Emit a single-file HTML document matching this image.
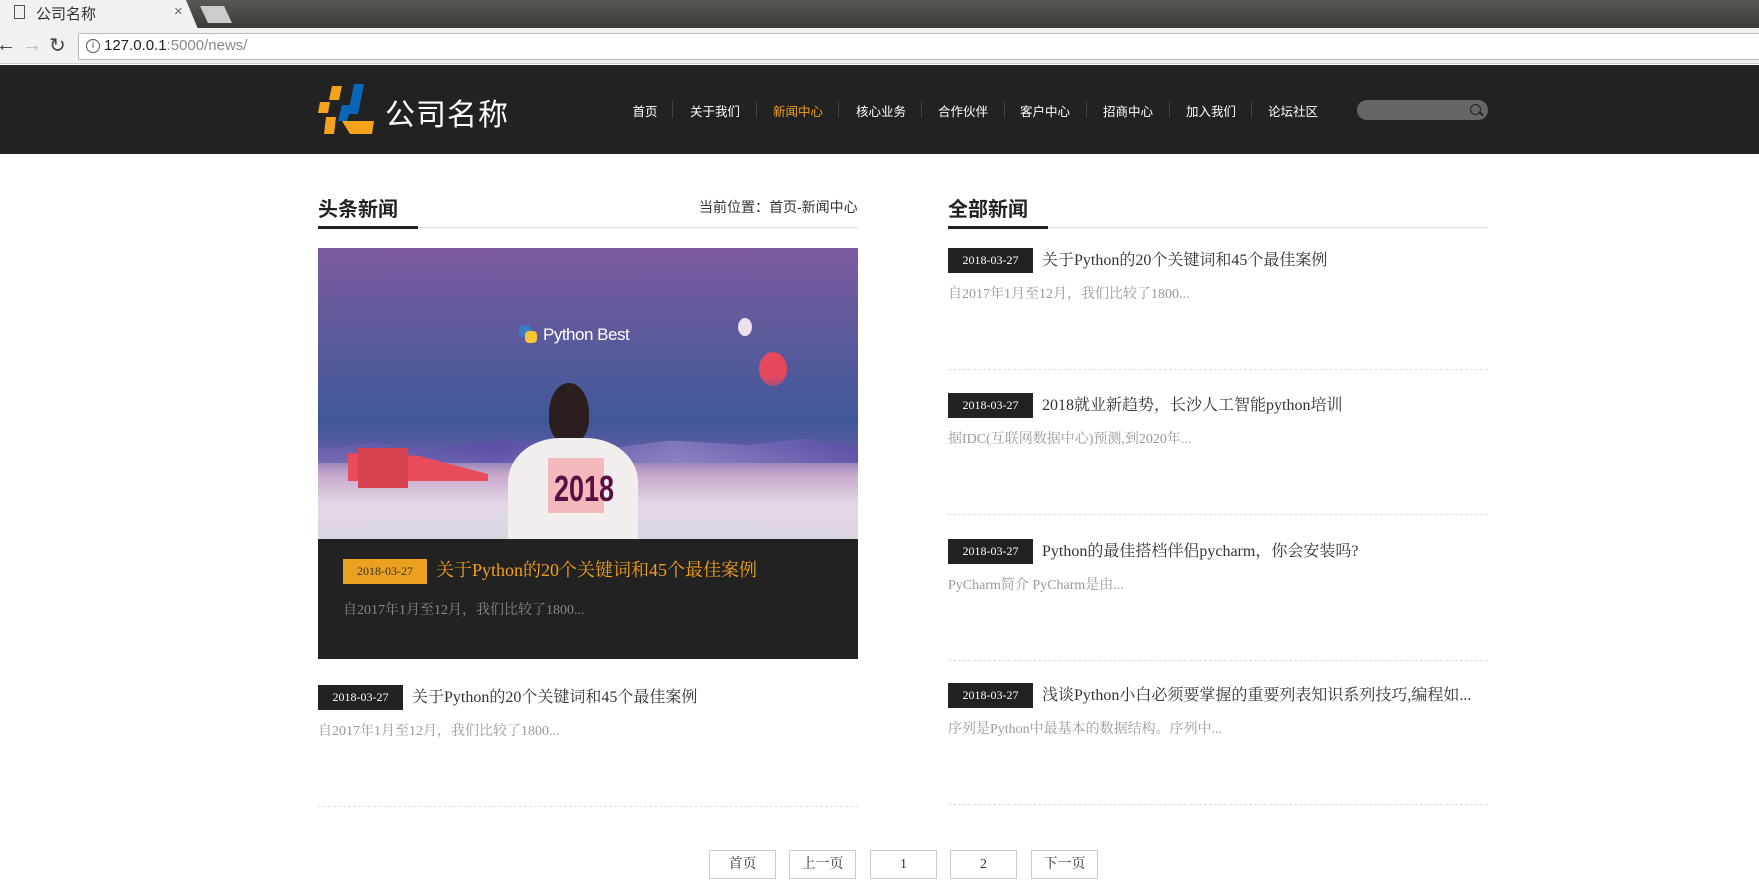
<!DOCTYPE html>
<html><head><meta charset="utf-8"><style>
*{margin:0;padding:0;box-sizing:border-box}
body{width:1759px;height:888px;overflow:hidden;background:#fff;font-family:"Liberation Sans","Noto Sans CJK SC",sans-serif;position:relative}
.abs{position:absolute}
.serif{font-family:"Liberation Serif","Noto Serif CJK SC",serif}
.nav a{position:absolute;top:101px;color:#fff;font-size:12.5px;transform:translateX(-50%);white-space:nowrap}
.sep{position:absolute;top:101px;width:1px;height:17px;background:#444}
.date{position:absolute;background:#222;color:#fff;font-size:12px;text-align:center;line-height:25px;font-family:"Liberation Serif",serif}
.title{position:absolute;font-size:16px;color:#333;white-space:nowrap;line-height:25px}
.sum{position:absolute;font-size:14px;color:#999;white-space:nowrap}
.dash{position:absolute;height:0;border-top:1px dashed #ddd}
.pg{position:absolute;top:850px;height:29px;border:1px solid #ccc;font-size:14px;color:#333;text-align:center;line-height:27px}
</style></head><body>
<div class="abs" style="left:0;top:0;width:1759px;height:28px;background:linear-gradient(#5a5853,#3c3b37)"></div>
<div class="abs" style="left:0;top:0;width:198px;height:29px;background:#f2f1f0;clip-path:polygon(0 0,186px 0,198px 29px,0 29px)"></div>
<div class="abs" style="left:200px;top:6px;width:32px;height:17px;background:#ccc;clip-path:polygon(0 0,24px 0,32px 17px,8px 17px)"></div>
<div class="abs" style="left:14px;top:5px;width:11px;height:14px;border:1px solid #555"></div>
<div class="abs" style="left:36px;top:3px;font-size:15px;color:#333">公司名称</div>
<div class="abs" style="left:174px;top:3px;font-size:15px;color:#666">×</div>
<div class="abs" style="left:0;top:28px;width:1759px;height:36px;background:#f2f1f0;border-bottom:1px solid #ccc"></div>
<div class="abs" style="left:-4px;top:34px;font-size:20px;color:#333">←</div>
<div class="abs" style="left:22px;top:34px;font-size:20px;color:#bbb">→</div>
<div class="abs" style="left:49px;top:33px;font-size:20px;color:#444">↻</div>
<div class="abs" style="left:78px;top:33px;width:1700px;height:27px;background:#fff;border:1px solid #bbb;border-radius:2px"></div>
<div class="abs" style="left:86px;top:39px;width:14px;height:14px;border:1.5px solid #555;border-radius:50%;font-size:10px;text-align:center;line-height:11px;color:#555">i</div>
<div class="abs" style="left:104px;top:37px;font-size:15px;color:#222">127.0.0.1<span style="color:#888">:5000/news/</span></div>
<div class="abs" style="left:0;top:65px;width:1759px;height:89px;background:#222"></div>
<svg class="abs" style="left:318px;top:84px" width="62" height="52" viewBox="0 0 62 52">
<polygon points="14,2 24,2 21,16 11,16" fill="#f5a31a"/>
<polygon points="2,18 12,18 10,29 0,29" fill="#f5a31a"/>
<polygon points="8,33 18,33 16,50 6,50" fill="#f5a31a"/>
<polygon points="36,0 46,0 40,30 30,30" fill="#0a66b8"/>
<polygon points="24,21 34,21 29,37 20,37" fill="#0a66b8"/>
<polygon points="24,37 56,37 54,50 32,50" fill="#f5a31a"/>
</svg>
<div class="abs" style="left:385px;top:90px;font-size:30px;color:#fff;letter-spacing:1px">公司名称</div>
<div class="nav">
<a style="left:645px">首页</a><div class="sep" style="left:672px"></div>
<a style="left:715px">关于我们</a><div class="sep" style="left:756px"></div>
<a style="left:798px;color:#f0a020">新闻中心</a><div class="sep" style="left:838px"></div>
<a style="left:881px">核心业务</a><div class="sep" style="left:921px"></div>
<a style="left:963px">合作伙伴</a><div class="sep" style="left:1004px"></div>
<a style="left:1045px">客户中心</a><div class="sep" style="left:1086px"></div>
<a style="left:1128px">招商中心</a><div class="sep" style="left:1169px"></div>
<a style="left:1211px">加入我们</a><div class="sep" style="left:1251px"></div>
<a style="left:1293px">论坛社区</a>
</div>
<div class="abs" style="left:1357px;top:100px;width:131px;height:20px;background:#666;border-radius:10px"></div>
<div class="abs" style="left:1470px;top:104px;width:11px;height:11px;border:1.5px solid #222;border-radius:50%"></div>
<div class="abs" style="left:1479px;top:113px;width:5px;height:1.5px;background:#222;transform:rotate(45deg)"></div>
<div class="abs" style="left:318px;top:193px;font-size:20px;font-weight:bold;color:#222">头条新闻</div>
<div class="abs" style="left:699px;top:197px;font-size:14px;color:#333">当前位置：首页-新闻中心</div>
<div class="abs" style="left:318px;top:227px;width:540px;height:1px;background:#ddd"></div>
<div class="abs" style="left:318px;top:226px;width:100px;height:3px;background:#222"></div>
<div class="abs" style="left:318px;top:248px;width:540px;height:291px;overflow:hidden;background:linear-gradient(#7c5b9e 0%,#5c5a9c 30%,#3f5898 60%,#5a5aa0 68%,#c8a8cc 78%,#e2d8e6 88%,#ddd4e2 100%)">
 <div class="abs" style="left:0;top:185px;width:540px;height:30px;background:linear-gradient(90deg,#6b64b0,#5a4ea8,#8a80c4,#5a4ea8);clip-path:polygon(0 60%,10% 30%,20% 55%,35% 20%,50% 60%,65% 25%,80% 40%,90% 20%,100% 50%,100% 100%,0 100%);opacity:.8"></div>
 <div class="abs" style="left:420px;top:70px;width:14px;height:18px;border-radius:50%;background:#ece0ee"></div>
 <div class="abs" style="left:441px;top:104px;width:28px;height:34px;border-radius:50%;background:linear-gradient(#e8485e 70%,#a05080)"></div>
 <div class="abs" style="left:201px;top:77px;width:12px;height:12px;background:#3b7bc8;border-radius:4px"></div>
 <div class="abs" style="left:207px;top:83px;width:12px;height:12px;background:#f4c535;border-radius:4px"></div>
 <div class="abs" style="left:225px;top:77px;font-size:17px;color:#fff;letter-spacing:-.5px">Python Best</div>
 <div class="abs" style="left:231px;top:135px;width:40px;height:60px;border-radius:50% 50% 40% 40%;background:#2a1e1e"></div>
 <div class="abs" style="left:190px;top:190px;width:130px;height:110px;border-radius:40% 40% 0 0;background:#f2eeee"></div>
 <div class="abs" style="left:230px;top:210px;width:56px;height:55px;background:#f3b9bd"></div>
 <div class="abs" style="left:226px;top:220px;font-size:36px;font-weight:bold;color:#5a0f40;transform:scaleX(.75);font-family:'Liberation Sans',sans-serif">2018</div>
 <div class="abs" style="left:30px;top:205px;width:140px;height:28px;background:#e84b5a;clip-path:polygon(0 0,50% 10%,100% 75%,100% 100%,0 100%)"></div>
 <div class="abs" style="left:40px;top:200px;width:50px;height:40px;background:#d84352"></div>
</div>
<div class="abs" style="left:318px;top:539px;width:540px;height:120px;background:#222"></div>
<div class="abs" style="left:343px;top:559px;width:84px;height:25px;background:#eca020;color:#333;font-size:12px;text-align:center;line-height:25px;font-family:'Liberation Serif',serif">2018-03-27</div>
<div class="title serif" style="left:436px;top:558px;font-size:18px;color:#f0a020">关于Python的20个关键词和45个最佳案例</div>
<div class="sum serif" style="left:343px;top:599px;color:#888">自2017年1月至12月，我们比较了1800...</div>
<div class="date" style="left:318px;top:685px;width:85px">2018-03-27</div>
<div class="title serif" style="left:412px;top:685px">关于Python的20个关键词和45个最佳案例</div>
<div class="sum serif" style="left:318px;top:720px">自2017年1月至12月，我们比较了1800...</div>
<div class="dash" style="left:318px;top:806px;width:540px"></div>
<div class="abs" style="left:948px;top:193px;font-size:20px;font-weight:bold;color:#222">全部新闻</div>
<div class="abs" style="left:948px;top:227px;width:540px;height:1px;background:#ddd"></div>
<div class="abs" style="left:948px;top:226px;width:100px;height:3px;background:#222"></div>
<div class="date" style="left:948px;top:248px;width:85px">2018-03-27</div>
<div class="title serif" style="left:1042px;top:248px">关于Python的20个关键词和45个最佳案例</div>
<div class="sum serif" style="left:948px;top:283px">自2017年1月至12月，我们比较了1800...</div>
<div class="dash" style="left:948px;top:369px;width:540px"></div>
<div class="date" style="left:948px;top:393px;width:85px">2018-03-27</div>
<div class="title serif" style="left:1042px;top:393px">2018就业新趋势，长沙人工智能python培训</div>
<div class="sum serif" style="left:948px;top:428px">据IDC(互联网数据中心)预测,到2020年...</div>
<div class="dash" style="left:948px;top:514px;width:540px"></div>
<div class="date" style="left:948px;top:539px;width:85px">2018-03-27</div>
<div class="title serif" style="left:1042px;top:539px">Python的最佳搭档伴侣pycharm，你会安装吗?</div>
<div class="sum serif" style="left:948px;top:574px">PyCharm简介 PyCharm是由...</div>
<div class="dash" style="left:948px;top:660px;width:540px"></div>
<div class="date" style="left:948px;top:683px;width:85px">2018-03-27</div>
<div class="title serif" style="left:1042px;top:683px">浅谈Python小白必须要掌握的重要列表知识系列技巧,编程如...</div>
<div class="sum serif" style="left:948px;top:718px">序列是Python中最基本的数据结构。序列中...</div>
<div class="dash" style="left:948px;top:804px;width:540px"></div>
<div class="pg serif" style="left:709px;width:67px">首页</div>
<div class="pg serif" style="left:789px;width:67px">上一页</div>
<div class="pg serif" style="left:870px;width:67px">1</div>
<div class="pg serif" style="left:950px;width:67px">2</div>
<div class="pg serif" style="left:1031px;width:67px">下一页</div>
</body></html>
